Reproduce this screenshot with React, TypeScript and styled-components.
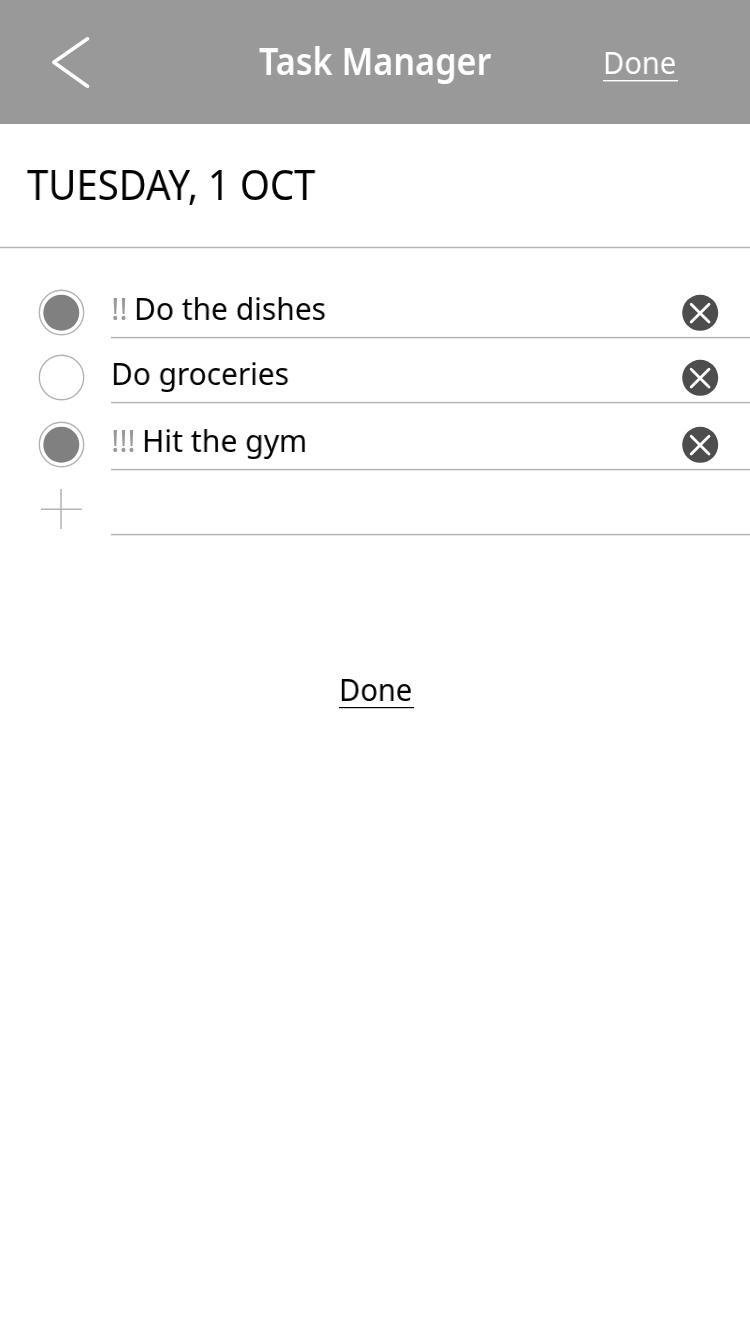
import React from "react";
import styled, { createGlobalStyle } from "styled-components";

const GlobalStyle = createGlobalStyle`
  *, *::before, *::after { box-sizing: border-box; }
  body { margin: 0; background: #fff; font-family: "Noto Sans", sans-serif; color: #000; }
  button { border: 0; padding: 0; background: none; font: inherit; color: inherit; }
`;

const Screen = styled.main`
  width: 750px;
  min-height: 1334px;
  background: #fff;
`;

const Header = styled.header`
  display: grid;
  grid-template-columns: 259px 344px 147px;
  height: 124px;
  background: #999;
  color: #fff;
`;

const BackButton = styled.button`
  display: flex;
  align-items: flex-start;
  padding: 34px 0 0 48px;
`;

const Label = styled.span<{ $scale: number }>`
  display: inline-block;
  white-space: pre;
  transform: scaleX(${(p) => p.$scale});
  transform-origin: left;
  will-change: transform;
`;

const Title = styled.h1`
  margin: 0;
  padding-top: 41px;
  font-size: 37.4px;
  line-height: 40px;
  font-weight: 600;
`;

const DoneLink = styled.button`
  display: block;
  width: 75px;
  height: 35px;
  text-align: left;
  font-size: 30px;
  line-height: 32px;
  font-weight: 400;
  border-bottom: 1px solid currentColor;
  box-shadow: 0 1px rgba(128, 128, 128, 0.4);
  white-space: nowrap;
`;

const HeaderDoneLink = styled(DoneLink)`
  height: 36px;
  box-shadow: 0 1px rgba(255, 255, 255, 0.4);
`;

const HeaderAction = styled.div`
  padding-top: 45px;
`;

const DateBar = styled.section`
  height: 124px;
  padding: 37px 0 0 27px;
  border-bottom: 1px solid #b3b3b3;
  box-shadow: 0 1px #ececec, inset 0 -1px #ececec;
`;

const DateHeading = styled.h2`
  margin: 0;
  font-size: 41px;
  line-height: 46px;
  font-weight: 400;
`;

const TaskList = styled.ul`
  margin: 0;
  padding: 25px 0 0;
  list-style: none;
`;

const TaskRow = styled.li<{ $height?: number }>`
  display: grid;
  grid-template-columns: 111px 1fr;
  align-items: end;
  height: ${(p) => p.$height ?? 65}px;
`;

const Marker = styled.button`
  display: flex;
  height: 50px;
  padding-left: 37px;
`;

const TaskBody = styled.div`
  display: flex;
  justify-content: space-between;
  height: 50px;
  padding-right: 31px;
  border-bottom: 1px solid #b3b3b3;
  box-shadow: 0 1px #e8e8e8, inset 0 -1px #f4f4f4;
`;

const TaskText = styled.div`
  display: flex;
  font-size: 31.8px;
  line-height: 40px;
`;

const Priority = styled.span<{ $width: number }>`
  width: ${(p) => p.$width}px;
  color: #999;
  font-weight: 400;
`;

const Marks = styled(Label)`
  letter-spacing: -0.4px;
`;

const DeleteButton = styled.button`
  display: flex;
  align-items: flex-start;
  padding-top: 6px;
`;

const Footer = styled.footer`
  display: flex;
  padding: 138px 0 0 339px;
`;

const Radio = ({ checked }: { checked: boolean }) => (
  <svg width="50" height="50" viewBox="0 0 50 50">
    <circle cx="24.5" cy="24.5" r="22.2" fill="#fff" stroke="#b3b3b3" strokeWidth="1.4" />
    {checked && <circle cx="24.3" cy="24.7" r="18" fill="#808080" />}
  </svg>
);

const Plus = () => (
  <svg width="50" height="50" viewBox="0 0 50 50" stroke="#b3b3b3" strokeWidth="1.5">
    <path d="M4 24.2H44.7M24 4V44" />
  </svg>
);

const Remove = () => (
  <svg width="37" height="37" viewBox="0 0 37 37">
    <circle cx="18.2" cy="18.8" r="18" fill="#4d4d4d" />
    <path d="M9.2 10.2L27 28M27 10.2L9.2 28" stroke="#fff" strokeWidth="2.8" strokeLinecap="round" />
  </svg>
);

const tasks = [
  { name: "Do the dishes", priority: "!!", indent: 23, checked: true, scale: 0.942 },
  { name: "Do groceries", priority: "", indent: 0, checked: false, scale: 0.938 },
  { name: "Hit the gym", priority: "!!!", indent: 31, checked: true, height: 67, scale: 0.948 },
];

export default function App() {
  return (
    <Screen>
      <GlobalStyle />
      <Header>
        <BackButton aria-label="Back">
          <svg width="44" height="56" viewBox="0 0 44 56" fill="none" stroke="#fff" strokeWidth="3.6" strokeLinecap="round" strokeLinejoin="round">
            <path d="M39.5 4.8L5.8 28.3L39.5 52.2" />
          </svg>
        </BackButton>
        <Title>
          <Label $scale={0.914}>Task Manager</Label>
        </Title>
        <HeaderAction>
          <HeaderDoneLink>
            <Label $scale={0.97}>Done</Label>
          </HeaderDoneLink>
        </HeaderAction>
      </Header>
      <DateBar>
        <DateHeading>
          <Label $scale={0.936}>TUESDAY, 1 OCT</Label>
        </DateHeading>
      </DateBar>
      <TaskList>
        {tasks.map((task) => (
          <TaskRow key={task.name} $height={task.height}>
            <Marker aria-label="Toggle task">
              <Radio checked={task.checked} />
            </Marker>
            <TaskBody>
              <TaskText>
                {task.priority && (
                  <Priority $width={task.indent}>
                    <Marks $scale={0.98}>{task.priority}</Marks>
                  </Priority>
                )}
                <Label $scale={task.scale}>{task.name}</Label>
              </TaskText>
              <DeleteButton aria-label="Delete task">
                <Remove />
              </DeleteButton>
            </TaskBody>
          </TaskRow>
        ))}
        <TaskRow>
          <Marker aria-label="Add task">
            <Plus />
          </Marker>
          <TaskBody />
        </TaskRow>
      </TaskList>
      <Footer>
        <DoneLink>
          <Label $scale={0.97}>Done</Label>
        </DoneLink>
      </Footer>
    </Screen>
  );
}
